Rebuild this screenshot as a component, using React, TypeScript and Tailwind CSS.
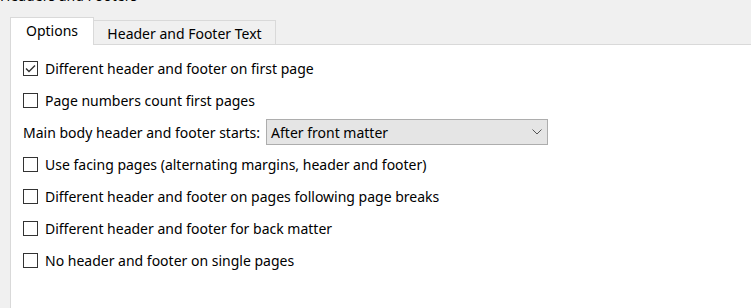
import React from "react";

function Check({ checked }: { checked?: boolean }) {
  return (
    <span className="w-[15px] h-[15px] border border-[#333333] bg-white flex items-center justify-center shrink-0">
      {checked && (
        <svg width="13" height="13" viewBox="0 0 13 13">
          <polyline points="2,6.5 5,9.5 11,3.5" fill="none" stroke="#333333" strokeWidth="1.4" />
        </svg>
      )}
    </span>
  );
}

function Row({ label, checked }: { label: string; checked?: boolean }) {
  return (
    <div className="h-[32px] flex items-center gap-[7px]">
      <Check checked={checked} />
      <span>{label}</span>
    </div>
  );
}

export default function App() {
  return (
    <div
      className="w-[751px] h-[308px] bg-[#f0f0f0] overflow-hidden flex flex-col text-[14px] text-black"
      style={{ fontFamily: '"Noto Sans", sans-serif' }}
    >
      <div className="leading-[20px] -mt-[14px] h-[20px] whitespace-nowrap">Headers and Footers</div>
      <div className="flex items-end h-[29px] ml-[10px] mt-[10px] relative z-10">
        <div className="w-[84px] h-[28px] bg-white border border-b-0 border-[#d9d9d9] flex items-center justify-center pb-[2px]">
          Options
        </div>
        <div className="w-[182px] h-[25px] border-t border-r border-[#d9d9d9] flex items-center justify-center">
          Header and Footer Text
        </div>
      </div>
      <div className="flex-1 ml-[10px] -mt-[1px] bg-white border-l border-t border-[#d9d9d9] pt-[7px] pl-[12px]">
        <Row checked label="Different header and footer on first page" />
        <Row label="Page numbers count first pages" />
        <div className="h-[32px] flex items-center gap-[6px]">
          <span>Main body header and footer starts:</span>
          <div className="w-[282px] h-[26px] bg-[#e5e5e5] border border-[#adadad] flex items-center justify-between pl-[4px] pr-[5px]">
            <span>After front matter</span>
            <svg width="10" height="6" viewBox="0 0 10 6">
              <polyline points="0.5,0.5 5,5 9.5,0.5" fill="none" stroke="#555555" strokeWidth="1" />
            </svg>
          </div>
        </div>
        <Row label="Use facing pages (alternating margins, header and footer)" />
        <Row label="Different header and footer on pages following page breaks" />
        <Row label="Different header and footer for back matter" />
        <Row label="No header and footer on single pages" />
      </div>
    </div>
  );
}
